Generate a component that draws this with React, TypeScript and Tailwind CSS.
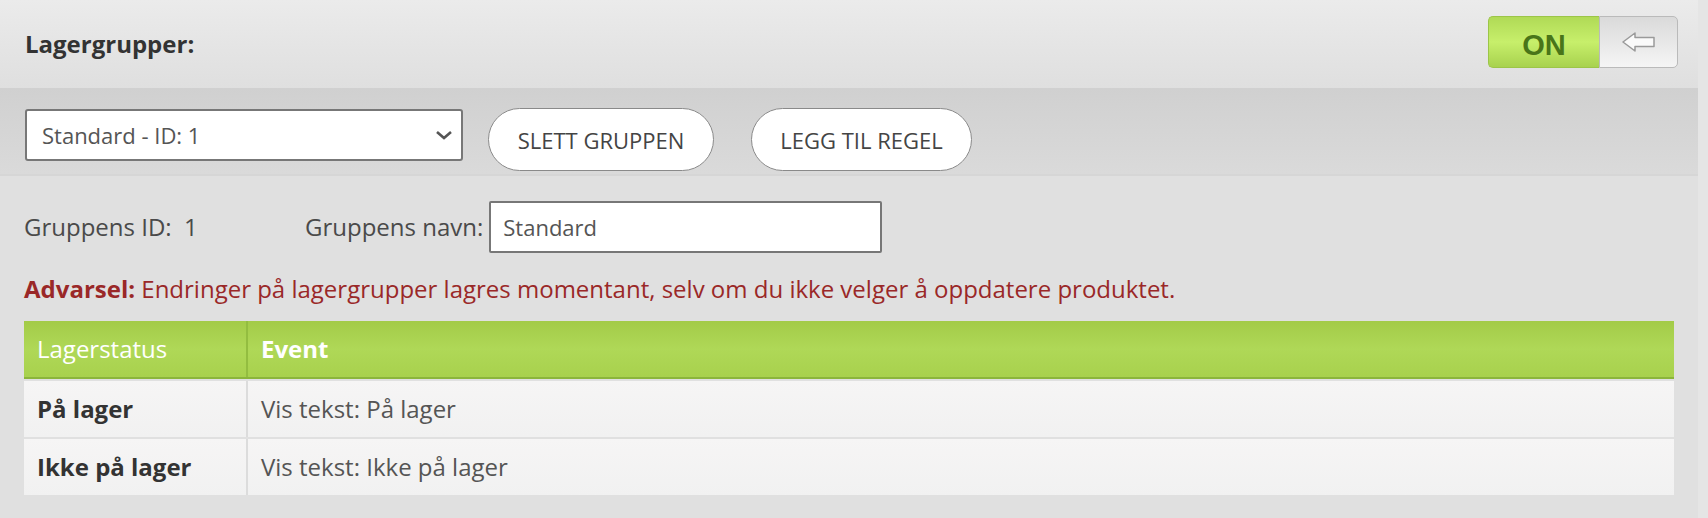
import React from "react";

export default function App() {
  return (
    <div className="flex w-[1708px] h-[518px] overflow-hidden bg-[#e0e0e0] font-['Open_Sans',sans-serif]">
      <div className="flex flex-col w-[1698px] h-full">
        {/* Header */}
        <div className="flex items-center justify-between h-[88px] pl-[25px] pr-[20px] bg-gradient-to-b from-[#ebebeb] to-[#dfdfdf]">
          <div className="text-[24px] leading-[32px] font-bold text-[#333]">Lagergrupper:</div>
          <div className="flex h-[52px] w-[190px] -mt-[4px]">
            <div className="flex items-center justify-center w-[111px] h-full rounded-l-[5px] border border-[#9cc548] border-r-0 bg-gradient-to-b from-[#b0da56] via-[#c7ef6b] to-[#a8d24e]">
              <span className="mt-[6px] font-['Liberation_Sans',Arial,sans-serif] font-bold text-[29px] leading-none text-[#497519]">ON</span>
            </div>
            <div className="flex items-center justify-center w-[79px] h-full rounded-r-[5px] border border-[#bababa] bg-gradient-to-b from-[#dadada] to-[#f5f5f5]">
              <svg width="34" height="20" viewBox="0 0 34 20">
                <polygon
                  points="1,10 13,1 13,5.5 32,5.5 32,14.5 13,14.5 13,19"
                  fill="#fafafa"
                  stroke="#9a9a9a"
                  strokeWidth="1.5"
                  strokeLinejoin="round"
                />
              </svg>
            </div>
          </div>
        </div>

        {/* Toolbar */}
        <div className="flex items-start h-[88px] pt-[20px] pl-[25px] bg-gradient-to-b from-[#d0d0d0] to-[#dadada] border-b-[2px] border-[#d6d6d6]">
          <div className="relative flex items-center w-[438px] h-[52px] mt-[1px] bg-white border-2 border-[#777] rounded-[3px] pl-[15px]">
            <span className="text-[22px] leading-[30px] text-[#555]">Standard - ID: 1</span>
            <svg className="absolute right-[8px] top-[19px]" width="18" height="10" viewBox="0 0 18 10">
              <polyline points="2,2 9,8 16,2" fill="none" stroke="#555" strokeWidth="2.6" />
            </svg>
          </div>
          <div className="flex items-center justify-center w-[226px] h-[63px] ml-[25px] rounded-full bg-white border-[1.5px] border-[#8a8a8a] text-[22px] leading-[30px] text-[#444]">
            SLETT GRUPPEN
          </div>
          <div className="flex items-center justify-center w-[221px] h-[63px] ml-[37px] rounded-full bg-white border-[1.5px] border-[#8a8a8a] text-[22px] leading-[30px] text-[#444]">
            LEGG TIL REGEL
          </div>
        </div>

        {/* Content */}
        <div className="flex flex-col pl-[24px] pt-[25px]">
          <div className="flex items-center h-[52px]">
            <span className="w-[281px] text-[24px] leading-[32px] text-[#4a4a4a] whitespace-pre">Gruppens ID:  1</span>
            <span className="text-[24px] leading-[32px] text-[#4a4a4a]">Gruppens navn:</span>
            <div className="flex items-center w-[393px] h-[52px] ml-[6px] bg-white border-2 border-[#777] rounded-[2px] pl-[12px]">
              <span className="text-[22px] leading-[30px] text-[#555]">Standard</span>
            </div>
          </div>

          <div className="mt-[19px] text-[24px] leading-[33px] text-[#9a2828]">
            <span className="font-bold">Advarsel:</span> Endringer på lagergrupper lagres momentant, selv om du ikke velger å oppdatere produktet.
          </div>

          <div className="mt-[16px] w-[1650px] flex flex-col">
            <div className="flex h-[58px] border-b-[2px] border-[#8bb53b] bg-gradient-to-b from-[#a3cb48] via-[#afd857] to-[#a8d14d]">
              <div className="flex items-center w-[224px] pl-[13px] border-r-[2px] border-[#93bd40] text-[24px] leading-[32px] text-white">Lagerstatus</div>
              <div className="flex items-center pl-[13px] text-[24px] leading-[32px] font-bold text-white">Event</div>
            </div>
            <div className="flex h-[56px] mt-[2px] bg-gradient-to-b from-[#f6f5f5] to-[#f1f1f1]">
              <div className="flex items-center w-[224px] pl-[13px] border-r-[2px] border-[#dcdcdc] text-[24px] leading-[32px] font-bold text-[#333]">På lager</div>
              <div className="flex items-center pl-[13px] text-[24px] leading-[32px] text-[#555]">Vis tekst: På lager</div>
            </div>
            <div className="flex h-[56px] mt-[2px] bg-gradient-to-b from-[#f6f5f5] to-[#f1f1f1]">
              <div className="flex items-center w-[224px] pl-[13px] border-r-[2px] border-[#dcdcdc] text-[24px] leading-[32px] font-bold text-[#333]">Ikke på lager</div>
              <div className="flex items-center pl-[13px] text-[24px] leading-[32px] text-[#555]">Vis tekst: Ikke på lager</div>
            </div>
          </div>
        </div>
      </div>
      <div className="w-[10px] h-full bg-[#e5e5e5]" />
    </div>
  );
}
